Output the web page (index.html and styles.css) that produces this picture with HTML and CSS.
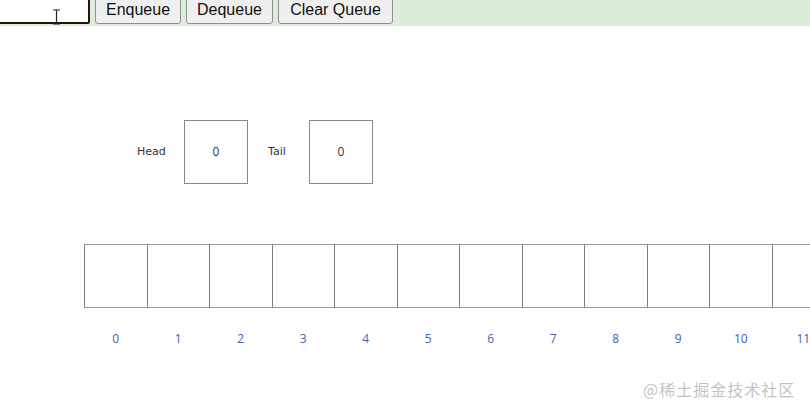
FILE: index.html
```html
<!DOCTYPE html>
<html>
<head>
<meta charset="utf-8">
<link rel="stylesheet" href="styles.css">
</head>
<body>
<div class="toolbar">
  <input class="value-input" type="text">
  <button class="btn">Enqueue</button>
  <button class="btn">Dequeue</button>
  <button class="btn">Clear Queue</button>
  <svg class="cursor" width="9" height="16" viewBox="0 0 9 16"><path d="M1 1h7M4.5 1v14M1 15h7" stroke="#222" stroke-width="1.2" fill="none"/></svg>
</div>
<div class="pointers">
  <span class="ptr-label head-label">Head</span>
  <div class="ptr-box">0</div>
  <span class="ptr-label tail-label">Tail</span>
  <div class="ptr-box">0</div>
</div>
<div class="queue">
  <div class="cells">
    <div class="cell"></div><div class="cell"></div><div class="cell"></div><div class="cell"></div>
    <div class="cell"></div><div class="cell"></div><div class="cell"></div><div class="cell"></div>
    <div class="cell"></div><div class="cell"></div><div class="cell"></div><div class="cell"></div>
  </div>
  <div class="indices">
    <span class="idx">0</span><span class="idx">1</span><span class="idx">2</span><span class="idx">3</span>
    <span class="idx">4</span><span class="idx">5</span><span class="idx">6</span><span class="idx">7</span>
    <span class="idx">8</span><span class="idx">9</span><span class="idx">10</span><span class="idx">11</span>
  </div>
</div>
<div class="watermark">@稀土掘金技术社区</div>
</body>
</html>
```
FILE: styles.css
```css
html, body {
  margin: 0;
  padding: 0;
  overflow: hidden;
  background: #ffffff;
}
body {
  width: 810px;
  height: 412px;
  position: relative;
  font-family: "Liberation Sans", Arial, sans-serif;
}
.toolbar {
  position: relative;
  height: 26px;
  background: #dcedd9;
  display: flex;
  align-items: flex-end;
  gap: 5px;
  padding-bottom: 2px;
  box-sizing: border-box;
}
.value-input {
  width: 94px;
  height: 30px;
  margin-left: -4px;
  box-sizing: border-box;
  border: 2px solid #2a0f0f;
  border-radius: 2px;
  background: #fff;
  outline: none;
  padding: 0;
}
.btn {
  height: 30px;
  box-sizing: border-box;
  font-family: "Liberation Sans", Arial, sans-serif;
  font-size: 16px;
  color: #111;
  background: #efefef;
  border: 1px solid #8f8f8f;
  border-radius: 3px;
  padding: 1px 8px 0;
  display: flex;
  align-items: center;
  justify-content: center;
}
.btn:nth-of-type(1) { width: 86px; }
.btn:nth-of-type(2) { width: 87px; }
.btn:nth-of-type(3) { width: 115px; }
.cursor {
  position: absolute;
  left: 52px;
  top: 9px;
}
.pointers {
  display: flex;
  align-items: center;
  margin-top: 94px;
  padding-left: 137px;
  height: 64px;
  font-family: "DejaVu Sans", "Open Sans", sans-serif;
  color: #333;
}
.ptr-label {
  font-size: 11px;
  line-height: 1;
  margin-top: -2px;
}
.head-label { width: 47px; }
.tail-label { width: 41px; margin-left: 20px; }
.ptr-box {
  width: 64px;
  height: 64px;
  box-sizing: border-box;
  border: 1px solid #8a8a8a;
  display: flex;
  align-items: center;
  justify-content: center;
  font-family: "Open Sans", sans-serif;
  font-size: 12px;
  color: #333;
  padding-bottom: 2px;
}
.queue {
  margin-top: 60px;
  padding-left: 84px;
}
.cells {
  display: flex;
  width: 760px;
}
.cell {
  flex: 0 0 62.5px;
  height: 64px;
  box-sizing: border-box;
  border-left: 1px solid #7d7d7d;
  border-top: 1px solid #9a9a9a;
  border-bottom: 1px solid #9a9a9a;
}
.indices {
  display: flex;
  width: 760px;
  margin-top: 22px;
}
.idx {
  flex: 0 0 62.5px;
  box-sizing: border-box;
  text-align: center;
  font-family: "Open Sans", "DejaVu Sans", sans-serif;
  font-size: 12px;
  color: #4460b4;
  padding-left: 1px;
}
.watermark {
  position: absolute;
  left: 643px;
  top: 377px;
  font-family: "Noto Sans CJK SC", sans-serif;
  font-size: 16px;
  letter-spacing: 1px;
  color: #c4c4c4;
}
```
